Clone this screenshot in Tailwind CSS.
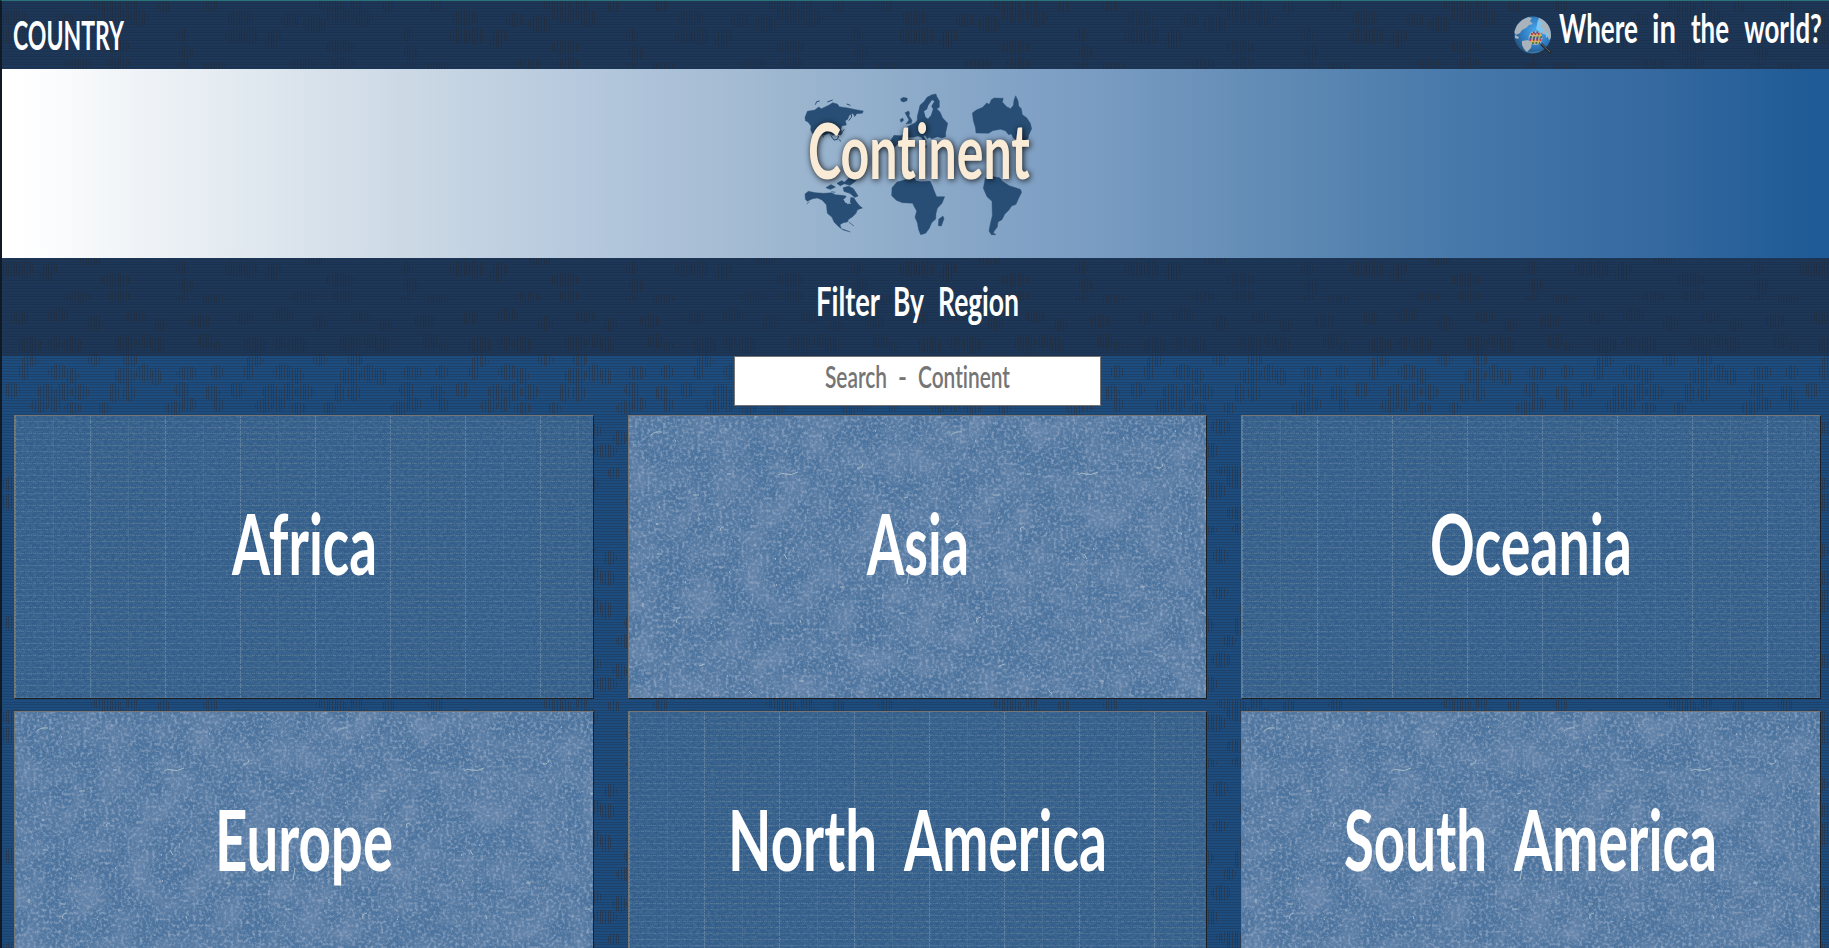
<!DOCTYPE html>
<html lang="en">
<head>
<meta charset="utf-8">
<title>Continent</title>
<script src="https://cdn.jsdelivr.net/npm/@tailwindcss/browser@4"></script>
</head>
<body class="bg-[#1c4b7c] overflow-hidden font-['Lato',sans-serif] font-bold [font-variant-ligatures:none]">
<!-- shared patterns -->
<svg class="absolute w-0 h-0" aria-hidden="true">
  <defs>
    <pattern id="lines" width="8" height="8" patternUnits="userSpaceOnUse"><path d="M0 0h8v1H0zM0 3h8v1H0zM0 6h8v1H0z" fill="#1d3a5c" opacity=".55"/></pattern>
    <pattern id="stripes" width="8" height="8" patternUnits="userSpaceOnUse"><path d="M0 0h1v8H0zM3 0h1v8H3zM6 0h1v8H6z" fill="#29364a" opacity=".7"/></pattern>
    <pattern id="camo" width="225" height="233" patternUnits="userSpaceOnUse">
      <g id="blobs" fill="url(#stripes)"></g>
    </pattern>
    <filter id="weaveNoise" x="0" y="0" width="100%" height="100%" color-interpolation-filters="sRGB"><feTurbulence type="fractalNoise" baseFrequency=".28 .45" numOctaves="3" seed="4"/><feColorMatrix values="0 0 0 0 .31  0 0 0 0 .45  0 0 0 0 .59  0 1.5 0 0 -.55"/></filter>
    <filter id="paperNoise" x="0" y="0" width="100%" height="100%" color-interpolation-filters="sRGB"><feTurbulence type="fractalNoise" baseFrequency=".035" numOctaves="5" seed="9"/><feColorMatrix values="0 0 0 0 .46  0 0 0 0 .56  0 0 0 0 .7  0 1.3 0 0 -.45"/></filter>
    <filter id="speckNoise" x="0" y="0" width="100%" height="100%" color-interpolation-filters="sRGB"><feTurbulence type="fractalNoise" baseFrequency=".32" numOctaves="3" seed="5"/><feColorMatrix values="0 0 0 0 .54  0 0 0 0 .63  0 0 0 0 .75  0 2.6 0 0 -1.15"/></filter>
    <pattern id="weave" width="75" height="6" patternUnits="userSpaceOnUse">
      <path d="M0 5.5H75" stroke="#7f9ba5" stroke-opacity=".32" stroke-dasharray="3 1 1 1"/>
      <path d="M.5 0V6" stroke="#a9bcc6" stroke-opacity=".34" stroke-dasharray="2 1"/>
      <path d="M38.500 0V6" stroke="#93abb8" stroke-opacity=".16" stroke-dasharray="2 1"/>
    </pattern>
    <pattern id="scratches" width="300" height="300" patternUnits="userSpaceOnUse">
      <g fill="none" stroke="#b0c1ca" stroke-opacity=".9">
        <path d="M22 19Q26 15 33 16M149 59Q152 56 157 58T169 56M228 52Q233 53 234 48M92 115Q90 111 95 111M48 207Q46 202 52 201"/>
        <path d="M64 79h6M28 138h5M211 171h5M46 192h5M270 197h5M97 12v3M155 138l3 5M14 187v4M171 204l1 3M82 207l1 1M98 58h4M278 168l2-12M170 265h5M70 250l6-2M230 240h4M120 275l3 3M275 82l4-1"/>
        <path d="M46 25h1M30 91h1M69 102h1M28 107v2M164 133h1M146 143h1M100 156h1M56 166h1M147 169h1M194 22h1M246 15h1M252 118h1M98 260h1M200 250h1" stroke-width="1.5"/>
      </g>
    </pattern>
  </defs>
</svg>
<div class="relative flex flex-col w-full h-[948px] border-t border-t-[#2b7377] border-l-2 border-l-[#0f1a24] overflow-hidden isolate">
  <svg class="absolute inset-0 -z-10 w-full h-full" viewBox="2 1 1827 947"><path d="M0 0h1829v948H0z" fill="#1d4c7f"/><path d="M0 0h1829v948H0z" fill="url(#lines)"/><path d="M0 0h1829v948H0z" fill="url(#camo)"/></svg>

  <header class="flex justify-between h-[68px] shrink-0 bg-[#1b2736]/55">
    <svg class="w-[140px] h-[68px] overflow-visible" viewBox="2 1 140 68" fill="#fff" font-size="40.500"><text x="13" y="50" textLength="111" lengthAdjust="spacingAndGlyphs">COUNTRY</text></svg>
    <svg class="w-[329px] h-[68px] overflow-visible" viewBox="1500 1 329 68" fill="#fff" font-size="40">
      <defs><radialGradient id="sea" cx=".6" cy=".4" r=".6"><stop offset="0" stop-color="#4aaaf2"/><stop offset=".7" stop-color="#2d78bd"/><stop offset="1" stop-color="#285985"/></radialGradient><clipPath id="globe"><circle cx="1532.5" cy="35" r="18.5"/></clipPath></defs>
      <circle cx="1532.5" cy="35" r="18.500" fill="url(#sea)"/>
      <g clip-path="url(#globe)" fill="#a9b3bb">
        <path d="M1514 32L1517 25L1522 20L1528 17L1532 18L1530 21L1533 24L1529 25L1526 28L1522 30L1520 33L1516 35zM1515 35L1519 37L1518 39L1515 38zM1522 41L1528 40L1532 43L1531 48L1527 52L1524 49L1522 45zM1539 17L1546 20L1551 28L1552 37L1549 40L1547 35L1543 34L1540 31L1541 27L1537 25z"/>
        <path d="M1538 20l5 3-3 3 5 4-4 3-5-4zM1545 30l4 5-3 3z" fill="#7cc5ee"/>
        <path d="M1518 49Q1532 55 1546 49L1541 55H1522z" fill="#4a9bc9" opacity=".5"/>
      </g>
      <circle cx="1535.5" cy="38" r="7" fill="#b5aea8"/>
      <g stroke-width="1.8" stroke-dasharray="1.8 1.6"><path stroke="#cc343a" d="M1531 34h9M1529.500 40h12"/><path stroke="#417541" d="M1530 37h12M1532 43h8"/><path stroke="#d9b43b" d="M1533 35.500h8M1531 41.500h8"/><path stroke="#3c4f9a" d="M1529.500 38.500h11M1533 32.500h6"/></g>
      <path d="M1541 44L1550.500 53" stroke="#25292d" stroke-width="2.600"/><path d="M1541 43.500L1550 52" stroke="#8b8f91" stroke-width=".6"/>
      <text x="1559" y="42.500" textLength="79" lengthAdjust="spacingAndGlyphs">Where</text><text x="1652" y="42.500" textLength="24" lengthAdjust="spacingAndGlyphs">in</text><text x="1691" y="42.500" textLength="38" lengthAdjust="spacingAndGlyphs">the</text><text x="1744" y="42.500" textLength="78" lengthAdjust="spacingAndGlyphs">world?</text>
    </svg>
  </header>

  <section class="flex justify-center h-[189px] shrink-0 bg-[linear-gradient(90deg,#fff_0%,#fff_1%,#ccd9e5_22%,#b5c8dd_32%,#a2bad2_41%,#91aecb_48%,#789bc2_60.5%,#628cb5_69%,#4678aa_80%,#34689f_91%,#1f5b96_99%,#1f5b96_100%)]">
    <svg class="w-[280px] h-[189px] overflow-visible" viewBox="776 69 280 189">
      <g transform="translate(780 70) scale(.33333)" fill="#284e75" stroke="#284e75" stroke-width="1.2" stroke-linejoin="round">
        <path d="M75 142L82 124L104 120L116 111L124 116L146 106L158 98L172 102L178 110L204 114L228 119L250 123L247 130L230 131L224 140L219 130L208 136L203 148L196 152L199 165L185 168L183 178L187 190L181 196L172 192L158 196L146 190L132 196L120 188L112 194L104 186L98 192L92 180L93 168L84 156L76 152z"/>
        <path d="M106 104l4-9 9-2M142 96l16-6M200 102l11 4M126 190l4 12M152 196l10 14 10-2 4-10M185 188l8-10M176 208l7 6M206 152l8-10 1-9" fill="none" stroke-width="3"/>
        <path d="M362 86l9-4 11 3-1 7-10 4-8-3zM375 128L386 123L389 130L387 137L396 151L394 160L378 162L387 150zM360 149l8-5 3 7-8 6z"/>
        <path d="M415 127L420 106L433 94L441 82L456 74L468 72L470 79L478 93L478 112L470 116L480 126L488 144L503 160L501 170L497 188L497 200L486 204L472 200L456 206L448 202L442 206L436 196L430 198L440 214L436 220L424 202L414 198L400 202L380 202L366 208L356 218L346 230L330 226L328 218L342 196L361 197L375 192L372 176L390 166L406 158L412 150L412 138z"/>
        <path d="M434 226h5v8h-5z"/>
        <path d="M437 142L432 124L441 118L445 106L456 90L463 94L454 109L459 117L453 136L444 146z" fill="#8dabcb" stroke="none"/>
        <path d="M577 129L589 120L608 112L620 99L628 103L634 89L642 84L670 85L667 96L680 110L692 116L700 106L702 90L707 77L714 92L716 108L724 116L727 134L740 143L751 160L755 176L746 196L744 206L730 212L712 210L700 204L694 192L686 194L676 182L661 178L638 182L626 190L588 189L586 172L580 152z"/>
        <path d="M75 372L85 364L107 368L132 370L155 368L166 374L186 376L198 378L196 394L204 404L211 394L212 382L222 384L228 394L236 404L244 414L232 420L228 430L218 440L206 448L202 456L190 458L180 464L184 476L196 480L211 486L190 480L176 470L162 456L156 442L142 430L139 404L126 390L112 384L98 386L82 394L76 388z"/>
        <path d="M138 353l15-9 13 7-15 7zM171 340l14-8 12 7-16 8zM190 353L206 349L220 356L234 378L224 382L210 370L192 364zM190 340L206 325L234 322L226 334L210 346zM154 365l12 2M232 404L247 414L236 416M206 456L222 468M80 402l8-7" stroke-width="2"/>
        <path d="M190 388L202 380L212 382L208 392L213 402L203 400L196 398z" fill="#93afcd" stroke="none"/>
        <path d="M351 336L381 328L402 324L409 332L426 335L450 333L456 345L464 366L470 380L494 380L486 400L472 415L468 431L467 447L455 458L448 475L437 490L422 494L416 480L412 458L405 442L410 423L402 409L398 400L383 399L367 398L349 391L335 377L336 353zM476 448l13-10 3 8-8 22-9-1z"/>
        <path d="M616 323L634 319L659 323L669 335L688 347L721 358L725 367L714 389L708 403L695 408L686 421L674 433L666 449L654 456L652 471L645 480L640 488L648 494L634 494L627 483L631 461L637 437L636 394L621 380L610 355z"/>
      </g>
      <text x="808" y="178.500" font-size="77" textLength="222" lengthAdjust="spacingAndGlyphs" fill="#faebd7" style="filter:drop-shadow(1px 1px 3px rgba(0,0,0,.9))">Continent</text>
    </svg>
  </section>

  <section class="flex justify-center h-[98px] shrink-0 bg-[#1b2736]/55">
    <svg class="w-[240px] h-[98px] overflow-visible" viewBox="796 258 240 98" fill="#fff" font-size="40.500">
      <text x="816" y="315.500" textLength="64" lengthAdjust="spacingAndGlyphs">Filter</text><text x="893" y="315.500" textLength="31" lengthAdjust="spacingAndGlyphs">By</text><text x="938" y="315.500" textLength="81" lengthAdjust="spacingAndGlyphs">Re<tspan font-family="Open Sans" font-size="37">g</tspan>ion</text>
    </svg>
  </section>

  <div class="flex justify-center h-[59px] shrink-0 pl-[3px]">
    <div class="w-[367px] h-[50px] bg-white border border-[#767676]">
      <svg class="w-[365px] h-12" viewBox="735 357 365 48" fill="#757575" font-size="31.500" font-weight="600"><text x="825" y="387.500" textLength="62" lengthAdjust="spacingAndGlyphs">Search</text><text x="898" y="387.500" textLength="9" lengthAdjust="spacingAndGlyphs">-</text><text x="918" y="387.500" textLength="92" lengthAdjust="spacingAndGlyphs">Continent</text></svg>
    </div>
  </div>

  <main class="grid grid-cols-[580px_579px_580px] auto-rows-[284px] gap-x-[34px] gap-y-3 pl-3 text-white text-[85px]">
    <div class="border border-t-[#767676] border-l-[#767676] border-r-[#1b2025] border-b-[#1b2025] bg-[#335e8b]"><svg class="w-full h-full" viewBox="0 0 578 282" fill="#fff"><path d="M0 0h578v282H0z" filter="url(#weaveNoise)"/><path d="M0 0h578v282H0z" fill="url(#weave)"/><text x="217" y="158.500" textLength="145" lengthAdjust="spacingAndGlyphs">Africa</text></svg></div>
    <div class="border border-t-[#767676] border-l-[#767676] border-r-[#1b2025] border-b-[#1b2025] bg-[#4c749e]"><svg class="w-full h-full" viewBox="0 0 577 282" fill="#fff"><path d="M0 0h578v282H0z" filter="url(#paperNoise)"/><path d="M0 0h578v282H0z" filter="url(#speckNoise)"/><path d="M0 0h578v282H0z" fill="url(#scratches)"/><text x="238" y="158.500" textLength="102" lengthAdjust="spacingAndGlyphs">Asia</text></svg></div>
    <div class="border border-t-[#767676] border-l-[#767676] border-r-[#1b2025] border-b-[#1b2025] bg-[#335e8b]"><svg class="w-full h-full" viewBox="0 0 578 282" fill="#fff"><path d="M0 0h578v282H0z" filter="url(#weaveNoise)"/><path d="M0 0h578v282H0z" fill="url(#weave)"/><text x="188" y="158.500" textLength="202" lengthAdjust="spacingAndGlyphs">Oceania</text></svg></div>
    <div class="border border-t-[#767676] border-l-[#767676] border-r-[#1b2025] border-b-[#1b2025] bg-[#4c749e]"><svg class="w-full h-full" viewBox="0 0 578 282" fill="#fff"><path d="M0 0h578v282H0z" filter="url(#paperNoise)"/><path d="M0 0h578v282H0z" filter="url(#speckNoise)"/><path d="M0 0h578v282H0z" fill="url(#scratches)"/><text x="200" y="158.500" textLength="178" lengthAdjust="spacingAndGlyphs">Europe</text></svg></div>
    <div class="border border-t-[#767676] border-l-[#767676] border-r-[#1b2025] border-b-[#1b2025] bg-[#335e8b]"><svg class="w-full h-full" viewBox="0 0 577 282" fill="#fff"><path d="M0 0h578v282H0z" filter="url(#weaveNoise)"/><path d="M0 0h578v282H0z" fill="url(#weave)"/><text x="99" y="158.500" textLength="149" lengthAdjust="spacingAndGlyphs">North</text><text x="275" y="158.500" textLength="203" lengthAdjust="spacingAndGlyphs">America</text></svg></div>
    <div class="border border-t-[#767676] border-l-[#767676] border-r-[#1b2025] border-b-[#1b2025] bg-[#4c749e]"><svg class="w-full h-full" viewBox="0 0 578 282" fill="#fff"><path d="M0 0h578v282H0z" filter="url(#paperNoise)"/><path d="M0 0h578v282H0z" filter="url(#speckNoise)"/><path d="M0 0h578v282H0z" fill="url(#scratches)"/><text x="102" y="158.500" textLength="143" lengthAdjust="spacingAndGlyphs">South</text><text x="272" y="158.500" textLength="203" lengthAdjust="spacingAndGlyphs">America</text></svg></div>
  </main>
</div>
<script>
// Camouflage spots of the page background: centre x, centre y, radius x, radius y.
const spots=[[106,5,15,6],[131,4,7,6],[164,7,7,6],[211,6,8,6],[15,18,14,8],[65,20,10,7],[90,24,12,9],[115,15,15,8],[138,18,10,9],[50,36,8,7],[25,36,10,9],[182,35,6,7],[10,36,12,8],[47,42,7,7],[186,53,7,8],[115,47,15,7],[78,64,14,5],[118,63,12,6],[213,66,12,4],[182,65,7,3],[30,112,13,8],[55,110,7,7],[72,112,10,9],[125,110,12,8],[145,108,7,7],[157,112,8,8],[205,108,9,8],[218,113,5,5],
[30,128,9,6],[95,127,8,6],[130,127,8,7],[24,139,6,8],[58,139,10,8],[72,143,7,8],[125,143,12,8],[144,140,8,9],[156,144,6,9],[187,140,11,7],[217,139,7,7],[12,157,8,8],[46,159,9,8],[64,159,8,9],[80,159,9,8],[114,160,6,10],[129,160,7,9],[182,157,8,8],[212,160,8,8],[39,173,9,7],[54,171,7,8],[73,175,9,6],[104,175,7,6],[175,175,9,7],[188,171,9,7],[218,172,6,7],
[20,85,9,7],[58,82,11,7],[95,90,8,8],[135,84,10,6],[160,92,7,7],[200,88,11,7],[28,195,12,7],[60,202,8,8],[96,194,10,8],[140,198,12,7],[170,205,7,8],[205,196,9,8],[45,220,12,7],[85,218,8,8],[125,222,9,6],[155,218,12,7],[198,222,9,7]];
document.getElementById('blobs').innerHTML=spots.map(([x,y,a,b])=>`<ellipse cx="${x}" cy="${y}" rx="${a}" ry="${b}"/>`).join('');
</script>
</body>
</html>
